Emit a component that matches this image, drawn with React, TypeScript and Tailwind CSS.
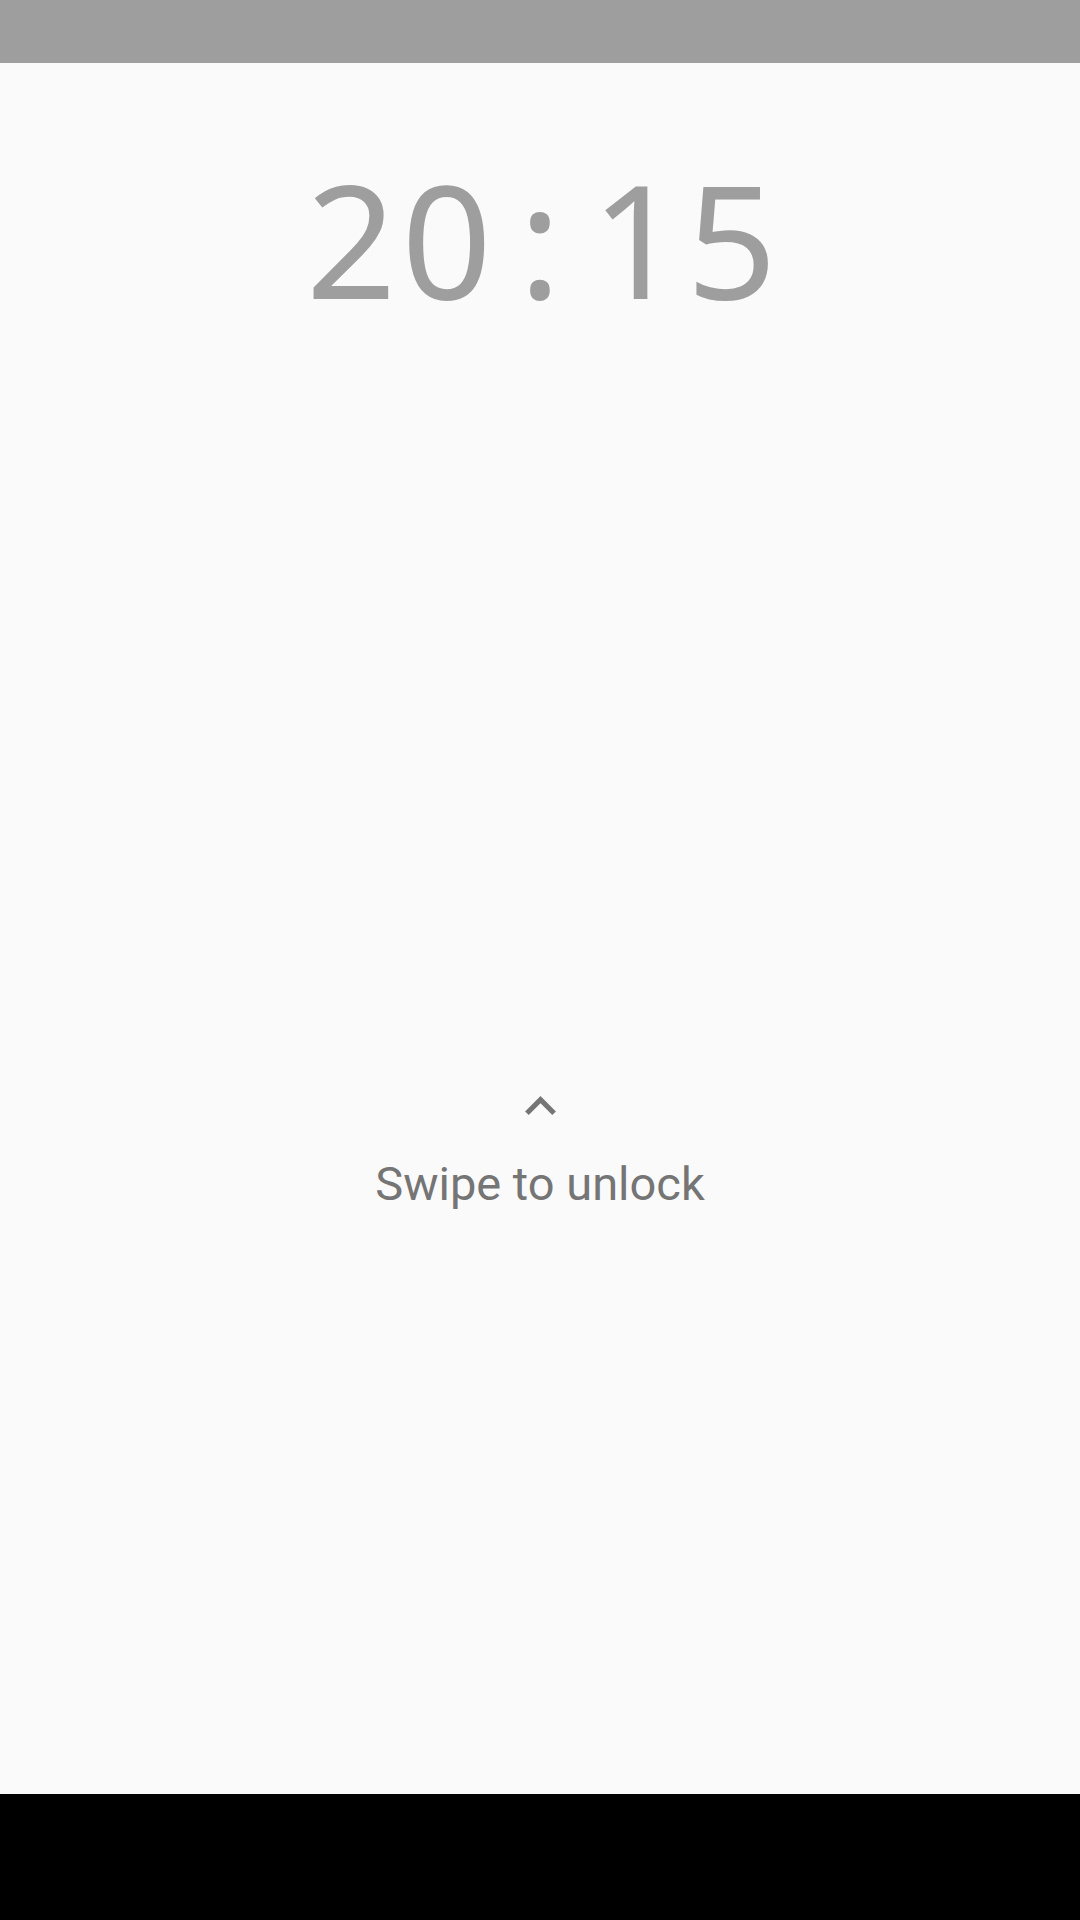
export default function App() {
  return (
    <div className="flex h-[1920px] w-[1080px] flex-col bg-[#fafafa]">
      {/* status bar */}
      <div className="h-[63px] w-full shrink-0 bg-[#9e9e9e]"></div>

      <main className="flex flex-1 flex-col items-center">
        {/* clock */}
        <div
          className="mt-[96px] flex items-center pl-[8px] text-[158px] leading-[158px] text-[#9e9e9e] [font-kerning:none]"
          style={{ fontFamily: '"Noto Sans", "Open Sans", sans-serif' }}
        >
          <span className="mr-[22px] tracking-[5px]">20</span>
          <span>:</span>
          <span className="ml-[30px] tracking-[5px]">15</span>
        </div>

        {/* unlock hint */}
        <svg
          className="mt-[779px] block h-[19px] w-[31px]"
          viewBox="6 8 12 7.41"
          fill="#757575"
        >
          <path d="M7.41 15.41L12 10.83l4.59 4.58L18 14l-6-6-6 6z" />
        </svg>
        <p
          className="mt-[34px] text-[47px] text-[#757575]"
          style={{ fontFamily: 'Roboto, "Liberation Sans", sans-serif' }}
        >
          Swipe to unlock
        </p>
      </main>

      {/* nav bar */}
      <div className="h-[126px] w-full shrink-0 bg-black"></div>
    </div>
  )
}
